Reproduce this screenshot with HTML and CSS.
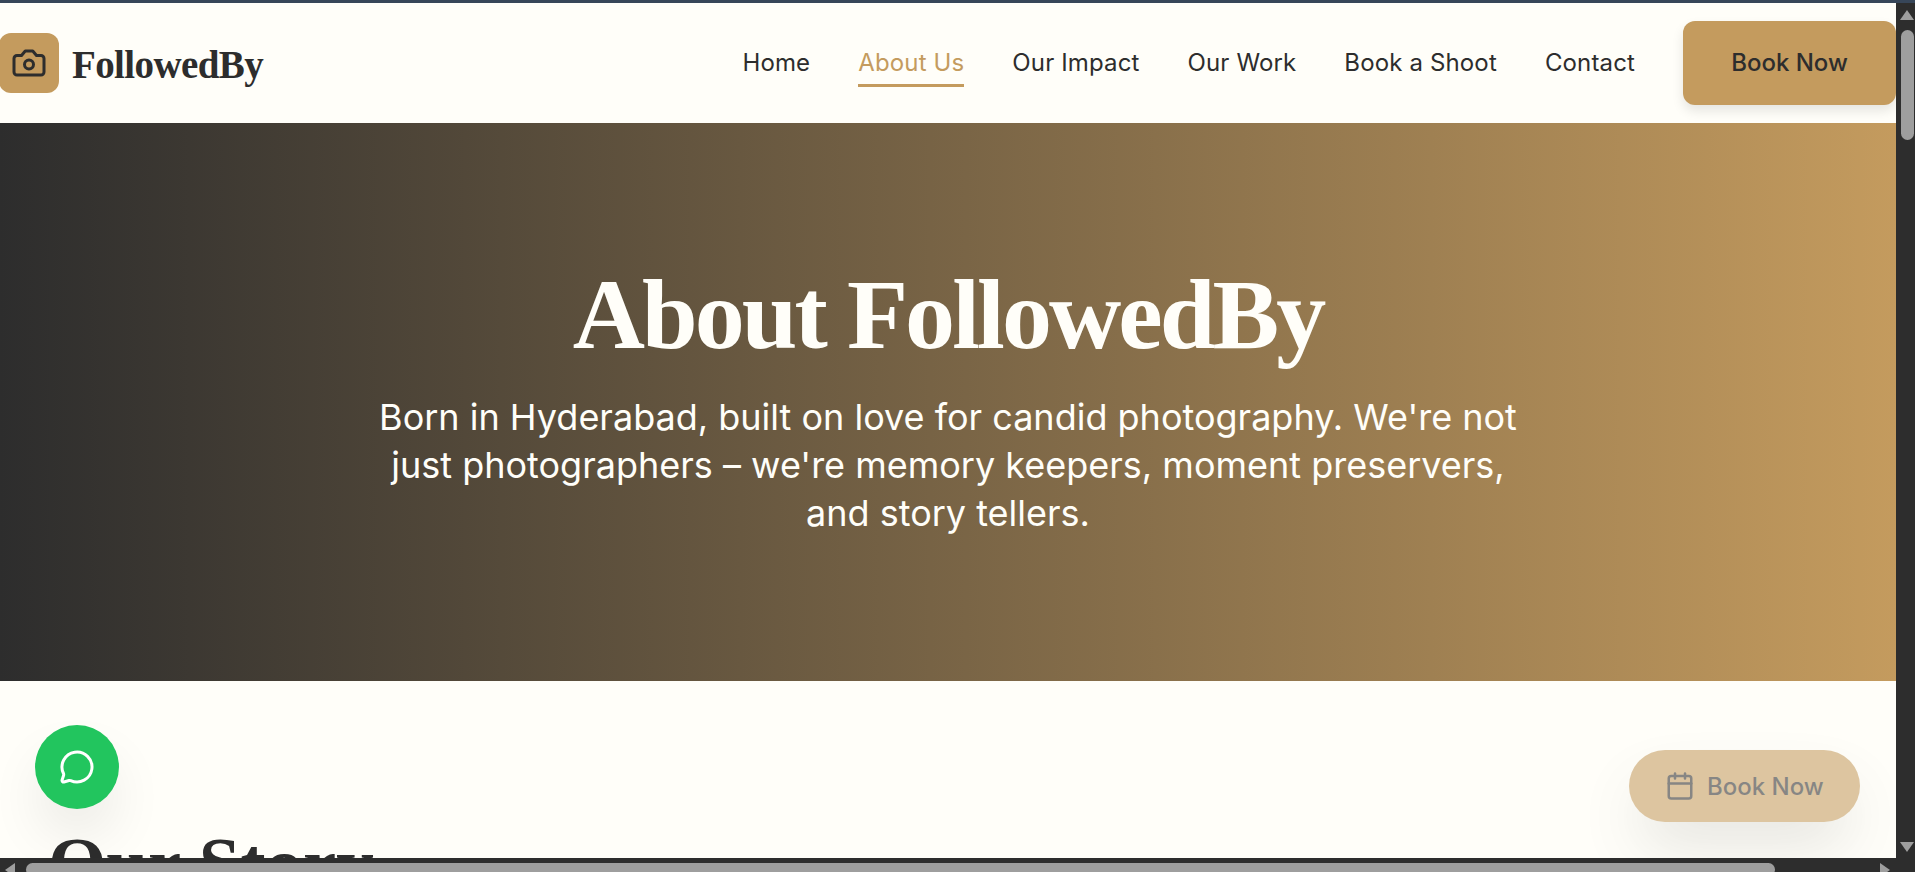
FILE: index.html
```html
<!DOCTYPE html>
<html lang="en">
<head>
<meta charset="utf-8">
<title>About FollowedBy</title>
<link rel="stylesheet" href="styles.css">
</head>
<body>
<div class="window">
  <div class="topline"></div>
  <div class="middle">
    <div class="viewport">
      <header class="header">
        <a class="brand" href="#">
          <span class="brand-icon">
            <svg class="icon-camera" viewBox="0 0 24 24" fill="none" stroke="currentColor" stroke-width="2" stroke-linecap="round" stroke-linejoin="round"><path d="M14.5 4h-5L7 7H4a2 2 0 0 0-2 2v9a2 2 0 0 0 2 2h16a2 2 0 0 0 2-2V9a2 2 0 0 0-2-2h-3l-2.5-3z"/><circle cx="12" cy="13" r="3"/></svg>
          </span>
          <span class="brand-name">FollowedBy</span>
        </a>
        <nav class="nav">
          <a class="nav-link" href="#">Home</a>
          <a class="nav-link is-active" href="#">About Us</a>
          <a class="nav-link" href="#">Our Impact</a>
          <a class="nav-link" href="#">Our Work</a>
          <a class="nav-link" href="#">Book a Shoot</a>
          <a class="nav-link" href="#">Contact</a>
          <a class="nav-cta" href="#">Book Now</a>
        </nav>
      </header>
      <section class="hero">
        <h1 class="hero-title">About FollowedBy</h1>
        <p class="hero-sub">Born in Hyderabad, built on love for candid photography. We're not just photographers – we're memory keepers, moment preservers, and story tellers.</p>
      </section>
      <section class="story">
        <h2 class="story-title">Our Story</h2>
      </section>
      <a class="whatsapp" href="#" aria-label="WhatsApp">
        <svg class="icon-chat" viewBox="0 0 24 24" fill="none" stroke="currentColor" stroke-width="2" stroke-linecap="round" stroke-linejoin="round"><path d="M2.992 16.342a2 2 0 0 1 .094 1.167l-1.065 3.29a1 1 0 0 0 1.236 1.168l3.413-.998a2 2 0 0 1 1.099.092 10 10 0 1 0-4.777-4.719"/></svg>
      </a>
      <a class="float-book" href="#">
        <svg class="icon-calendar" viewBox="0 0 24 24" fill="none" stroke="currentColor" stroke-width="2" stroke-linecap="round" stroke-linejoin="round"><path d="M8 2v4"/><path d="M16 2v4"/><rect x="3" y="4" width="18" height="18" rx="2"/><path d="M3 10h18"/></svg>
        <span>Book Now</span>
      </a>
    </div>
    <div class="vbar">
      <span class="arrow arrow-up"></span>
      <span class="vthumb"></span>
      <span class="arrow arrow-down"></span>
    </div>
  </div>
  <div class="hbar">
    <span class="arrow arrow-left"></span>
    <span class="hthumb"></span>
    <span class="arrow arrow-right"></span>
  </div>
</div>
</body>
</html>
```
FILE: styles.css
```css
* { box-sizing: border-box; }
html, body { margin: 0; height: 100%; overflow: hidden; }
body { font-family: "Inter", "Liberation Sans", sans-serif; color: #2d2d2d; background: #2d2d2d; }
a { color: inherit; text-decoration: none; }

.window { display: flex; flex-direction: column; width: 1915px; height: 872px; }
.topline { height: 3px; flex: none; background: #374659; }
.middle { display: flex; flex: 1; min-height: 0; }
.viewport { position: relative; flex: 1; min-width: 0; overflow: hidden; background: #fffef9; }

.header { display: flex; align-items: center; justify-content: space-between; height: 120px; background: #fffef9; }
.brand { display: flex; align-items: center; gap: 13px; margin-left: -1px; }
.brand-icon { display: flex; align-items: center; justify-content: center; width: 60px; height: 60px; background: #c49b5e; border-radius: 12px; }
.icon-camera { width: 36px; height: 36px; }
.brand-name { padding-top: 3px; font-family: "Liberation Serif", serif; font-weight: 700; font-size: 39px; line-height: 54px; letter-spacing: -0.6px; }

.nav { display: flex; align-items: center; gap: 48px; }
.nav-link { display: block; height: 42px; margin-top: 6px; font-size: 24px; font-weight: 400; letter-spacing: 0.14px; line-height: 36px; border-bottom: 3px solid transparent; }
.nav-link.is-active { color: #c49b5e; border-bottom-color: #c49b5e; }
.nav-cta { display: block; width: 213px; height: 84px; font-size: 24px; font-weight: 500; line-height: 84px; text-align: center; background: #c49b5e; border-radius: 12px; box-shadow: 0 6px 12px rgba(0, 0, 0, 0.1); }

.hero { display: flex; flex-direction: column; align-items: center; height: 558px; padding-top: 132px; background: linear-gradient(90deg, #2d2d2d 0%, #c49b5e 100%); color: #fffef9; text-align: center; }
.hero-title { margin: 0; font-family: "Liberation Serif", serif; font-weight: 700; font-size: 100px; line-height: 120px; letter-spacing: -2.92px; }
.hero-sub { width: 1152px; margin: 18px 0 0; font-size: 36px; line-height: 48px; }

.story { padding: 138px 48px 0; }
.story-title { margin: 0; font-family: "Liberation Serif", serif; font-weight: 700; font-size: 75px; line-height: 90px; }

.whatsapp { position: absolute; left: 35px; top: 722px; display: flex; align-items: center; justify-content: center; width: 84px; height: 84px; background: #22c55e; color: #fff; border-radius: 50%; box-shadow: 0 30px 60px -10px rgba(0, 0, 0, 0.12); }
.icon-chat { width: 36px; height: 36px; }
.float-book { position: absolute; left: 1629px; top: 747px; display: flex; align-items: center; gap: 12px; height: 72px; padding: 0 36px; font-size: 24px; font-weight: 500; background: #c49b5e; border-radius: 36px; opacity: 0.57; box-shadow: 0 30px 60px -10px rgba(0, 0, 0, 0.2); }
.icon-calendar { width: 30px; height: 30px; }

.vbar { position: relative; flex: none; width: 19px; background: #2d2d2d; }
.vthumb { position: absolute; left: 5px; top: 27px; width: 13px; height: 110px; background: #9e9e9e; border-radius: 7px; }
.hbar { position: relative; flex: none; height: 14px; background: #2d2d2d; overflow: hidden; }
.hthumb { position: absolute; left: 26px; top: 5px; width: 1749px; height: 13px; background: #9e9e9e; border-radius: 7px; }

.arrow { position: absolute; width: 0; height: 0; border-style: solid; border-color: transparent; }
.arrow-up { left: 4px; top: 7px; border-width: 0 7px 10px; border-bottom-color: #9e9e9e; }
.arrow-down { left: 4px; bottom: 6px; border-width: 10px 7px 0; border-top-color: #9e9e9e; }
.arrow-left { left: 5px; top: 5px; border-width: 7px 10px 7px 0; border-right-color: #9e9e9e; }
.arrow-right { left: 1880px; top: 5px; border-width: 7px 0 7px 10px; border-left-color: #9e9e9e; }
```
